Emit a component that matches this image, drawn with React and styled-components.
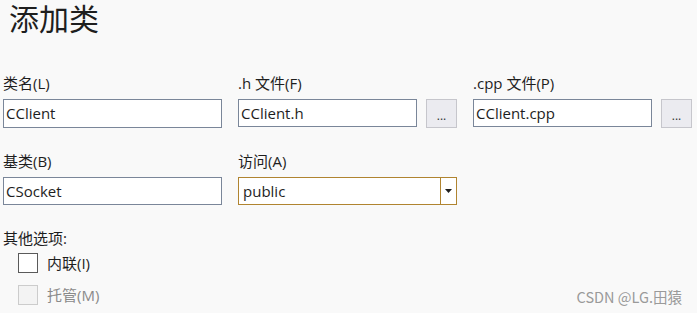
import React from 'react';
import styled, { createGlobalStyle } from 'styled-components';

const GlobalStyle = createGlobalStyle`
    html, body {
        margin: 0;
        padding: 0;
        background: #f9f9f9;
    }
    body {
        font-family: "Open Sans", "Noto Sans CJK SC", sans-serif;
        color: #1e1e1e;
    }
`;

const Page = styled.div`
    position: relative;
    width: 697px;
    height: 313px;
    padding: 3px 0 0 3px;
    box-sizing: border-box;
    overflow: hidden;
`;

const Title = styled.h1`
    margin: 0 0 37px 6px;
    font-size: 30px;
    line-height: 33px;
    font-weight: 400;
    color: #1e1e1e;
    font-family: "Liberation Sans", "Noto Sans CJK SC", sans-serif;
`;

const Grid = styled.div`
    display: grid;
    grid-template-columns: 219px 219px 219px;
    column-gap: 16px;
    row-gap: 23px;
    width: 690px;
`;

const Field = styled.div`
    display: flex;
    flex-direction: column;
    gap: 6px;
`;

const Label = styled.label`
    font-size: 15px;
    line-height: 20px;
    color: ${(p) => (p.$muted ? '#8a8a8a' : '#1e1e1e')};
`;

const InputRow = styled.div`
    display: flex;
    gap: 9px;
`;

const TextBox = styled.div`
    flex: 1;
    height: 28px;
    box-sizing: border-box;
    border: 1px solid #7a8699;
    background: #ffffff;
    padding: 0 2px;
    font-size: 15px;
    line-height: 26px;
    color: #1e1e1e;
`;

const Browse = styled.button`
    width: 31px;
    height: 29px;
    box-sizing: border-box;
    border: 1px solid #c6c6cc;
    background: #ebebf0;
    color: #333;
    font-size: 12px;
    line-height: 20px;
    padding: 4px 0 0;
    font-family: inherit;
`;

const Select = styled.div`
    display: flex;
    height: 28px;
    box-sizing: border-box;
    border: 1px solid #b08430;
    background: #ffffff;
`;

const SelectValue = styled.div`
    flex: 1;
    padding: 0 4px;
    font-size: 15px;
    line-height: 26px;
`;

const SelectArrow = styled.div`
    width: 15px;
    border-left: 1px solid #b08430;
    display: flex;
    align-items: center;
    justify-content: center;
`;

const Options = styled.div`
    margin-top: 23px;
    display: flex;
    flex-direction: column;
`;

const CheckRow = styled.div`
    display: flex;
    align-items: center;
    gap: 9px;
    padding-left: 15px;
    height: 20px;
    margin-top: ${(p) => p.$top}px;
`;

const Box = styled.span`
    width: 20px;
    height: 20px;
    box-sizing: border-box;
    border: 1px solid ${(p) => (p.$disabled ? '#cccccc' : '#5a5a5a')};
    background: ${(p) => (p.$disabled ? '#f3f3f3' : '#ffffff')};
`;

const Watermark = styled.div`
    position: absolute;
    right: 15px;
    bottom: 7px;
    font-size: 14.5px;
    line-height: 18px;
    color: #9a9a9a;
    font-family: "Noto Sans CJK SC", sans-serif;
`;

const App = () => {
    return (
        <Page>
            <GlobalStyle />
            <Title>添加类</Title>
            <Grid>
                <Field>
                    <Label>类名(L)</Label>
                    <TextBox>CClient</TextBox>
                </Field>
                <Field>
                    <Label>.h 文件(F)</Label>
                    <InputRow>
                        <TextBox>CClient.h</TextBox>
                        <Browse>...</Browse>
                    </InputRow>
                </Field>
                <Field>
                    <Label>.cpp 文件(P)</Label>
                    <InputRow>
                        <TextBox>CClient.cpp</TextBox>
                        <Browse>...</Browse>
                    </InputRow>
                </Field>
                <Field>
                    <Label>基类(B)</Label>
                    <TextBox>CSocket</TextBox>
                </Field>
                <Field>
                    <Label>访问(A)</Label>
                    <Select>
                        <SelectValue>public</SelectValue>
                        <SelectArrow>
                            <svg width="7" height="4" viewBox="0 0 7 4">
                                <path d="M0 0h7L3.5 4z" fill="#1e1e1e" />
                            </svg>
                        </SelectArrow>
                    </Select>
                </Field>
            </Grid>
            <Options>
                <Label>其他选项:</Label>
                <CheckRow $top={5}>
                    <Box />
                    <Label>内联(I)</Label>
                </CheckRow>
                <CheckRow $top={12}>
                    <Box $disabled />
                    <Label $muted>托管(M)</Label>
                </CheckRow>
            </Options>
            <Watermark>CSDN @LG.田猿</Watermark>
        </Page>
    );
};

export default App;
